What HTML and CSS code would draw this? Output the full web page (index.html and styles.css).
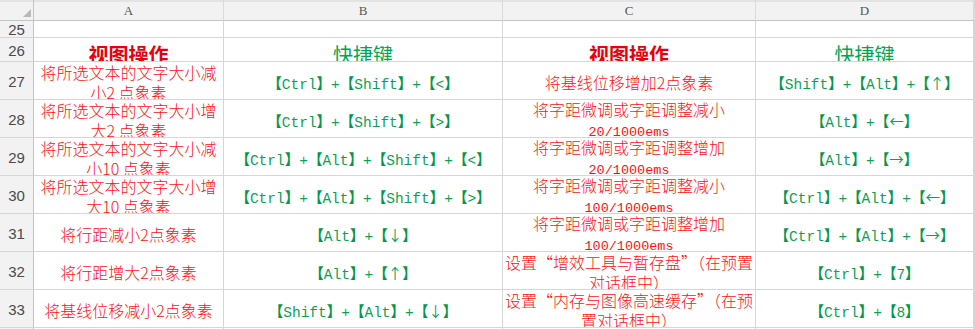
FILE: index.html
```html
<!DOCTYPE html>
<html lang="zh-CN">
<head>
<meta charset="utf-8">
<title>视图操作快捷键</title>
<link rel="stylesheet" href="styles.css">
</head>
<body>
<div class="sheet">
  <div class="corner"><svg class="tri" width="9" height="8" viewBox="0 0 9 8"><polygon points="9,0 9,8 1,8" fill="#b9b9b9"/></svg></div>
  <div class="ch">A</div><div class="ch">B</div><div class="ch">C</div><div class="ch">D</div><div class="ch"></div>

  <div class="rn">25</div><div class="c"></div><div class="c"></div><div class="c"></div><div class="c"></div><div class="c"></div>

  <div class="rn">26</div>
  <div class="c head red bold"><span>视图操作</span></div>
  <div class="c head green"><span>快捷键</span></div>
  <div class="c head red bold"><span>视图操作</span></div>
  <div class="c head green"><span>快捷键</span></div>
  <div class="c"></div>

  <div class="rn">27</div>
  <div class="c txt"><span>将所选文本的文字大小减小2 点象素</span></div>
  <div class="c key"><span><span class="b">【</span>Ctrl<span class="b">】</span>+<span class="b">【</span>Shift<span class="b">】</span>+<span class="b">【</span>&lt;<span class="b">】</span></span></div>
  <div class="c txt"><span>将基线位移增加2点象素</span></div>
  <div class="c key"><span><span class="b">【</span>Shift<span class="b">】</span>+<span class="b">【</span>Alt<span class="b">】</span>+<span class="b">【</span><span class="ar">↑</span><span class="b">】</span></span></div>
  <div class="c"></div>

  <div class="rn">28</div>
  <div class="c txt"><span>将所选文本的文字大小增大2 点象素</span></div>
  <div class="c key"><span><span class="b">【</span>Ctrl<span class="b">】</span>+<span class="b">【</span>Shift<span class="b">】</span>+<span class="b">【</span>&gt;<span class="b">】</span></span></div>
  <div class="c txt"><span>将字距微调或字距调整减小<span class="mono">20/1000ems</span></span></div>
  <div class="c key"><span><span class="b">【</span>Alt<span class="b">】</span>+<span class="b">【</span><span class="ar">←</span><span class="b">】</span></span></div>
  <div class="c"></div>

  <div class="rn">29</div>
  <div class="c txt"><span>将所选文本的文字大小减小10 点象素</span></div>
  <div class="c key"><span><span class="b">【</span>Ctrl<span class="b">】</span>+<span class="b">【</span>Alt<span class="b">】</span>+<span class="b">【</span>Shift<span class="b">】</span>+<span class="b">【</span>&lt;<span class="b">】</span></span></div>
  <div class="c txt"><span>将字距微调或字距调整增加<span class="mono">20/1000ems</span></span></div>
  <div class="c key"><span><span class="b">【</span>Alt<span class="b">】</span>+<span class="b">【</span><span class="ar">→</span><span class="b">】</span></span></div>
  <div class="c"></div>

  <div class="rn">30</div>
  <div class="c txt"><span>将所选文本的文字大小增大10 点象素</span></div>
  <div class="c key"><span><span class="b">【</span>Ctrl<span class="b">】</span>+<span class="b">【</span>Alt<span class="b">】</span>+<span class="b">【</span>Shift<span class="b">】</span>+<span class="b">【</span>&gt;<span class="b">】</span></span></div>
  <div class="c txt"><span>将字距微调或字距调整减小<span class="mono">100/1000ems</span></span></div>
  <div class="c key"><span><span class="b">【</span>Ctrl<span class="b">】</span>+<span class="b">【</span>Alt<span class="b">】</span>+<span class="b">【</span><span class="ar">←</span><span class="b">】</span></span></div>
  <div class="c"></div>

  <div class="rn">31</div>
  <div class="c txt"><span>将行距减小2点象素</span></div>
  <div class="c key"><span><span class="b">【</span>Alt<span class="b">】</span>+<span class="b">【</span><span class="ar">↓</span><span class="b">】</span></span></div>
  <div class="c txt"><span>将字距微调或字距调整增加<span class="mono">100/1000ems</span></span></div>
  <div class="c key"><span><span class="b">【</span>Ctrl<span class="b">】</span>+<span class="b">【</span>Alt<span class="b">】</span>+<span class="b">【</span><span class="ar">→</span><span class="b">】</span></span></div>
  <div class="c"></div>

  <div class="rn">32</div>
  <div class="c txt"><span>将行距增大2点象素</span></div>
  <div class="c key"><span><span class="b">【</span>Alt<span class="b">】</span>+<span class="b">【</span><span class="ar">↑</span><span class="b">】</span></span></div>
  <div class="c txt"><span>设置“增效工具与暂存盘”（在预置对话框中）</span></div>
  <div class="c key"><span><span class="b">【</span>Ctrl<span class="b">】</span>+<span class="b">【</span>7<span class="b">】</span></span></div>
  <div class="c"></div>

  <div class="rn">33</div>
  <div class="c txt"><span>将基线位移减小2点象素</span></div>
  <div class="c key"><span><span class="b">【</span>Shift<span class="b">】</span>+<span class="b">【</span>Alt<span class="b">】</span>+<span class="b">【</span><span class="ar">↓</span><span class="b">】</span></span></div>
  <div class="c txt"><span>设置“内存与图像高速缓存”（在预置对话框中）</span></div>
  <div class="c key"><span><span class="b">【</span>Ctrl<span class="b">】</span>+<span class="b">【</span>8<span class="b">】</span></span></div>
  <div class="c"></div>

  <div class="rn"></div><div class="c"></div><div class="c"></div><div class="c"></div><div class="c"></div><div class="c"></div>
</div>
</body>
</html>
```

FILE: styles.css
```css
html, body {
  margin: 0;
  padding: 0;
  background: #ffffff;
  overflow: hidden;
}

.sheet {
  display: grid;
  grid-template-columns: 34px 190px 279px 253px 218px 1fr;
  grid-template-rows: 21px 17px 24px repeat(7, 38px) 1fr;
  width: 975px;
  height: 330px;
}

.sheet > div {
  box-sizing: border-box;
  border-right: 1px solid #d6d6d6;
  border-bottom: 1px solid #d6d6d6;
  overflow: hidden;
  min-width: 0;
}

.corner {
  background: #f2f2f2;
  box-shadow: inset 0 2px 0 #e3e3e3;
  border-bottom-color: #c4c4c4 !important;
  border-right-color: #c4c4c4 !important;
  display: flex;
  justify-content: flex-end;
  align-items: flex-end;
  padding: 0 2px 3px 0;
}

.ch {
  background: #f2f2f2;
  box-shadow: inset 0 2px 0 #e3e3e3;
  border-bottom-color: #c4c4c4 !important;
  border-right-color: #dadada !important;
  display: flex;
  align-items: center;
  justify-content: center;
  padding-top: 2px;
  font-family: "Liberation Serif", "DejaVu Serif", serif;
  font-size: 13px;
  color: #555555;
}

.rn {
  background: #f2f2f2;
  border-right-color: #c4c4c4 !important;
  display: flex;
  align-items: center;
  justify-content: center;
  padding-top: 1px;
  font-family: "Liberation Sans", Arial, sans-serif;
  font-size: 15px;
  color: #4a4a4a;
}

.c {
  display: flex;
  align-items: center;
  justify-content: center;
  text-align: center;
}

.head {
  align-items: flex-start;
  padding-top: 7px;
  font-family: "Noto Sans CJK SC", sans-serif;
  font-size: 20px;
  line-height: 20px;
}

.bold {
  font-weight: 700;
}

.red {
  color: #e8000b;
}

.green {
  color: #00a651;
}

.txt {
  padding: 2px 2px 0;
  font-family: "Noto Sans CJK SC", sans-serif;
  font-weight: 300;
  font-size: 16px;
  line-height: 20px;
  color: #ff1010;
}

.mono {
  font-family: "Liberation Mono", "Noto Sans CJK SC", monospace;
  font-size: 13.5px;
  line-height: 1;
  font-weight: 400;
}

.key {
  padding-top: 3px;
  font-family: "Liberation Mono", "Noto Sans CJK SC", monospace;
  font-size: 14.5px;
  color: #0d9f55;
  white-space: nowrap;
}

.b {
  font-family: "Noto Sans CJK SC", sans-serif;
  font-weight: 700;
  color: #00984a;
}

.ar {
  font-family: "Noto Sans CJK SC", sans-serif;
}
```
